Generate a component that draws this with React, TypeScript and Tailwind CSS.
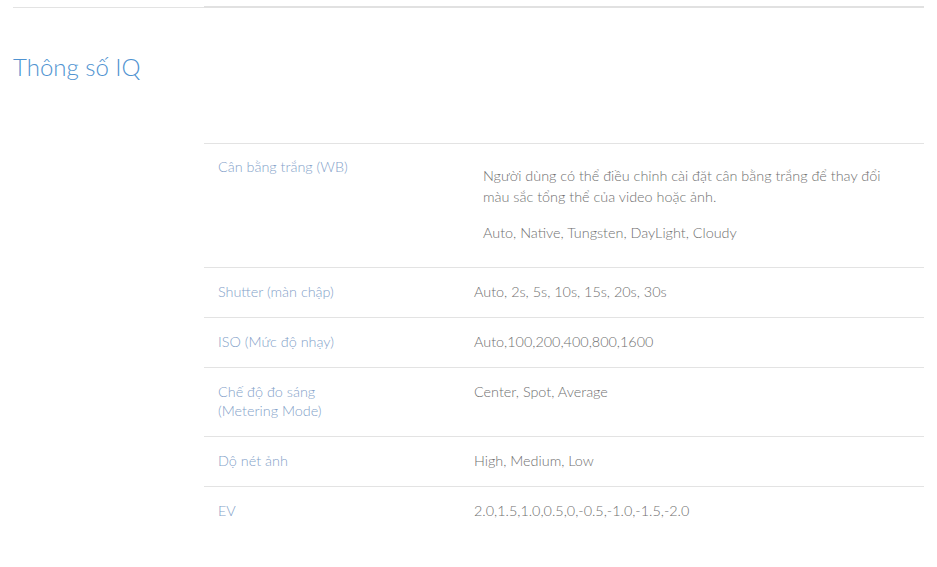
const rows: { label: string[]; value: string }[] = [
  { label: ["Shutter (màn chập)"], value: "Auto, 2s, 5s, 10s, 15s, 20s, 30s" },
  { label: ["ISO (Mức độ nhạy)"], value: "Auto,100,200,400,800,1600" },
  { label: ["Chế độ đo sáng", "(Metering Mode)"], value: "Center, Spot, Average" },
  { label: ["Dộ nét ảnh"], value: "High, Medium, Low" },
  { label: ["EV"], value: "2.0,1.5,1.0,0.5,0,-0.5,-1.0,-1.5,-2.0" },
];

const App = () => {
  return (
    <div className="min-h-screen bg-white px-[13px] font-['Lato',sans-serif] font-light">
      {/* end of previous section */}
      <div className="flex pt-[7px]">
        <div className="w-[191px] border-b border-[#e3e3e3]" />
        <div className="flex-1 border-b-2 border-[#e1e1e1] -mt-px" />
      </div>

      <h2 className="mt-[44px] text-[24px] leading-[30px] font-light text-[#4f93d1]">
        Thông số IQ
      </h2>

      <div className="ml-[191px] mt-[61px] text-[14.4px] leading-[19px]">
        <div className="flex border-t border-[#e3e3e3] pt-[13px] pb-[16px]">
          <div className="w-[270px] pl-[14px] text-[#849fc9]">
            Cân bằng trắng (WB)
          </div>
          <div className="flex-1 px-[9px] pt-2 pb-2 text-[#707070] leading-[21px]">
            <p className="mb-[15px] max-w-[410px]">
              Người dùng có thể điều chỉnh cài đặt cân bằng trắng để thay đổi
              màu sắc tổng thể của video hoặc ảnh.
            </p>
            <p>Auto, Native, Tungsten, DayLight, Cloudy</p>
          </div>
        </div>
        {rows.map((row, i) => (
          <div
            key={i}
            className="flex border-t border-[#e3e3e3] pt-[14px] pb-[16px]"
          >
            <div className="w-[270px] pl-[14px] text-[#849fc9]">
              {row.label.map((l, j) => (
                <div key={j}>{l}</div>
              ))}
            </div>
            <div className="flex-1 text-[#707070]">{row.value}</div>
          </div>
        ))}
      </div>
    </div>
  );
};

export default App;
